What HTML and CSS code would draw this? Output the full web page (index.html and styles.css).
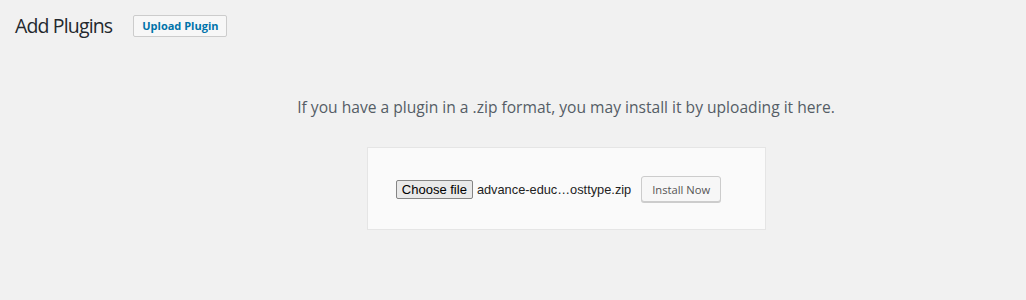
FILE: index.html
```html
<!DOCTYPE html>
<html lang="en">

<head>
    <meta charset="UTF-8">
    <meta name="viewport" content="width=device-width, initial-scale=1.0">
    <title>Add Plugins</title>
    <link rel="stylesheet" href="styles.css">
</head>

<body>
    <div class="wrap">
        <div class="heading">
            <h1>Add Plugins</h1>
            <button class="page-title-action">Upload Plugin</button>
        </div>
        <div class="upload-plugin">
            <p class="install-help">If you have a plugin in a .zip format, you may install it by uploading it here.</p>
            <form class="upload-form">
                <label class="file-input">
                    <span class="file-button">Choose file</span>
                    <span class="file-name">advance-educ…osttype.zip</span>
                </label>
                <button type="button" class="install-button">Install Now</button>
            </form>
        </div>
    </div>
</body>

</html>
```

FILE: styles.css
```css
body {
    margin: 0;
    padding: 0;
    background: #f1f1f1;
    color: #23282d;
    font-family: 'Open Sans', sans-serif;
    overflow: hidden;
}

.wrap {
    padding: 9px 15px 0 15px;
}

.heading {
    display: flex;
    align-items: center;
    gap: 21px;
}

h1 {
    font-size: 19.5px;
    font-weight: 400;
    letter-spacing: -0.85px;
    margin: 0;
    padding: 0;
    line-height: 34px;
}

.page-title-action {
    font-family: 'Open Sans', sans-serif;
    font-size: 11px;
    font-weight: 700;
    color: #0073aa;
    background: #f7f7f7;
    border: 1px solid #ccc;
    border-radius: 2px;
    padding: 0 8px;
    height: 22px;
    margin-top: -1px;
    cursor: pointer;
}

.upload-plugin {
    display: flex;
    flex-direction: column;
    align-items: center;
    margin-left: 106px;
}

.install-help {
    font-size: 15.6px;
    color: #555d66;
    margin: 54px 0 0 0;
    line-height: 20px;
}

.upload-form {
    display: flex;
    align-items: center;
    background: #fafafa;
    border: 1px solid #e5e5e5;
    padding: 28px 44px 27px 28px;
    margin-top: 30px;
    margin-left: 1px;
}

.file-input {
    display: flex;
    align-items: center;
    gap: 4px;
    font-family: 'Liberation Sans', Arial, sans-serif;
    font-size: 13px;
}

.file-button {
    background: #e9e9e9;
    border: 1px solid #858585;
    border-radius: 2px;
    padding: 1px 5px;
    color: #000;
    line-height: 15px;
}

.file-name {
    color: #222;
    font-size: 12.8px;
}

.install-button {
    margin-left: 10px;
    font-family: 'Open Sans', sans-serif;
    font-size: 11.2px;
    color: #555;
    background: #f7f7f7;
    border: 1px solid #ccc;
    border-radius: 3px;
    box-shadow: 0 1px 0 #ccc;
    height: 26px;
    padding: 0 10px;
    cursor: pointer;
}
```
